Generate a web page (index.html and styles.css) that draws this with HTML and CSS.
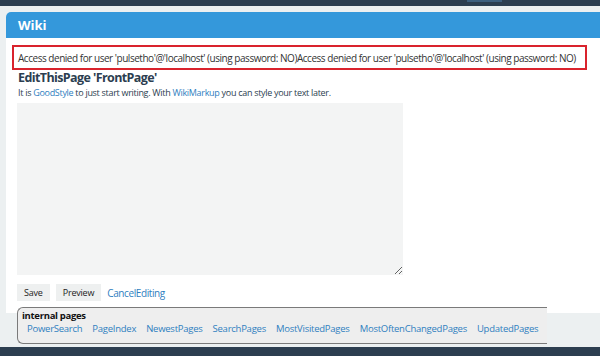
FILE: index.html
```html
<!DOCTYPE html>
<html lang="en">
<head>
    <meta charset="UTF-8">
    <title>Wiki - EditThisPage FrontPage</title>
    <link rel="stylesheet" href="styles.css">
</head>
<body>
    <div class="topbar">
        <span class="topbar-tab"></span>
    </div>

    <div class="page">
        <div class="card">
            <div class="card-head">Wiki</div>
            <div class="card-body">
                <div class="db-error">Access denied for user 'pulsetho'@'localhost' (using password: NO)Access denied for user 'pulsetho'@'localhost' (using password: NO)</div>

                <div class="edit-area">
                    <h2 class="edit-title">EditThisPage 'FrontPage'</h2>
                    <p class="edit-hint">It is <a href="#">GoodStyle</a> to just start writing. With <a href="#">WikiMarkup</a> you can style your text later.</p>
                    <textarea class="edit-text"></textarea>
                    <div class="edit-actions">
                        <button>Save</button>
                        <button>Preview</button>
                        <a href="#">CancelEditing</a>
                    </div>
                </div>
            </div>
        </div>

        <div class="internal-pages">
            <div class="internal-title">internal pages</div>
            <div class="internal-links">
                <a href="#">PowerSearch</a>
                <a href="#">PageIndex</a>
                <a href="#">NewestPages</a>
                <a href="#">SearchPages</a>
                <a href="#">MostVisitedPages</a>
                <a href="#">MostOftenChangedPages</a>
                <a href="#">UpdatedPages</a>
            </div>
        </div>
    </div>

    <div class="bottombar"></div>
</body>
</html>
```

FILE: styles.css
```css
:root {
    --dark: #2c3e50;
    --blue: #3498db;
    --link: #2f80c0;
    --page-bg: #ecf0f1;
    --text: #2c3e50;
    --error: #d9232d;
}

body {
    margin: 0;
    background-color: var(--page-bg);
    font-family: 'Open Sans', 'DejaVu Sans', sans-serif;
    font-size: 10px;
    letter-spacing: -0.4px;
    color: var(--text);
    overflow: hidden;
}

a {
    color: var(--link);
    text-decoration: none;
}

.topbar {
    height: 6px;
    background-color: var(--dark);
    display: flex;
}

.topbar-tab {
    margin-left: 467px;
    width: 35px;
    height: 2px;
    background-color: #3d5f7e;
}

.page {
    padding: 6px 0 0 6px;
    height: 335px;
}

.card {
    background-color: #fff;
    border-radius: 5px 0 0 0;
    height: 301px;
}

.card-head {
    background-color: var(--blue);
    color: #fff;
    font-weight: bold;
    font-size: 13px;
    letter-spacing: 0;
    height: 26px;
    line-height: 26px;
    padding: 0 12px;
    border-radius: 5px 0 0 0;
}

.card-body {
    padding: 7px 13px 0 6px;
}

.db-error {
    border: 2px solid var(--error);
    padding: 0 4px;
    height: 21px;
    line-height: 23px;
    letter-spacing: -0.47px;
    color: #333;
    white-space: nowrap;
}

.edit-area {
    padding-left: 5px;
}

.edit-title {
    margin: 0;
    padding-left: 1px;
    font-size: 12.5px;
    letter-spacing: -0.6px;
    line-height: 15px;
}

.edit-hint {
    margin: 0;
    padding-left: 1px;
    font-size: 9px;
    letter-spacing: -0.3px;
    line-height: 15px;
}

.edit-text {
    display: block;
    margin-top: 3px;
    width: 386px;
    height: 172px;
    box-sizing: border-box;
    border: none;
    background-color: #f3f4f4;
}

.edit-actions {
    display: flex;
    align-items: center;
    gap: 6px;
    margin-top: 9px;
}

.edit-actions button {
    font-family: inherit;
    font-size: 9px;
    letter-spacing: -0.2px;
    color: #222;
    background-color: #eef0f0;
    border: none;
    height: 17px;
    padding: 0 7px;
}

.edit-actions a {
    font-size: 10px;
}

.internal-pages {
    position: relative;
    margin: -6px 0 0 11px;
    width: 530px;
    box-sizing: border-box;
    height: 37px;
    background-color: #eeeeee;
    border: 1px solid #7a7a7a;
    border-right: none;
    border-radius: 6px 0 0 6px;
    padding: 2px 0 0 4px;
}

.internal-title {
    font-weight: bold;
    color: #111;
    font-size: 9.5px;
    letter-spacing: -0.3px;
    line-height: 12px;
}

.internal-links {
    display: flex;
    gap: 10px;
    padding-left: 5px;
    font-size: 9.5px;
    letter-spacing: -0.25px;
    line-height: 14px;
}

.bottombar {
    position: fixed;
    left: 0;
    right: 0;
    bottom: 0;
    height: 9px;
    background-color: var(--dark);
}
```
